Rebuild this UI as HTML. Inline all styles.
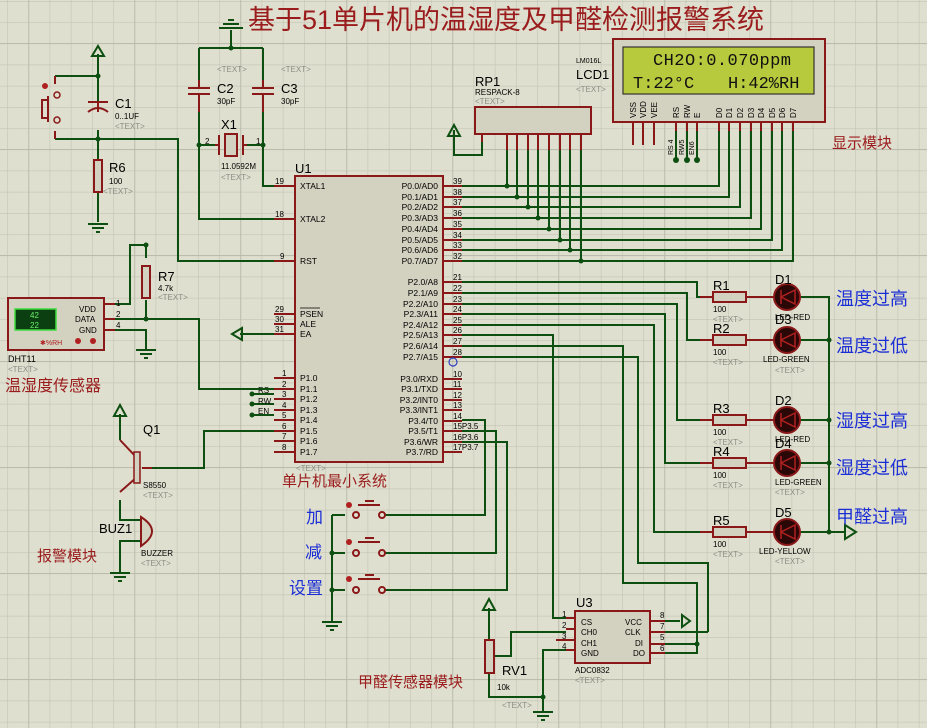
<!DOCTYPE html>
<html><head><meta charset="utf-8"><style>
html,body{margin:0;padding:0;background:#dfdfcf;}
svg{display:block;font-family:"Liberation Sans","Noto Sans CJK SC",sans-serif;}
.w{stroke:#0d4f10;stroke-width:2;fill:none}
.r{stroke:#8a1818;stroke-width:2;fill:none}
.b{fill:#d3d1c0;stroke:#8a1818;stroke-width:2}
.t{font-size:11px;fill:#000}
.s{font-size:8px;fill:#000}
.g{font-size:8px;fill:#8c8c84}
.n{font-size:13px;fill:#000}
.red{fill:#9a1c1c}
.blue{fill:#1c2fd6}
</style></head><body>
<svg width="927" height="728" viewBox="0 0 927 728" xmlns="http://www.w3.org/2000/svg">
<defs>
<pattern id="mn" x="7.2" y="1" width="21.2" height="21.2" patternUnits="userSpaceOnUse"><path d="M0 0H21.2M0 0V21.2" stroke="#c4c4b4" stroke-width="1.2" fill="none"/></pattern>
<pattern id="mj" x="28.3" y="43" width="106" height="106" patternUnits="userSpaceOnUse"><path d="M0 0H106M0 0V106" stroke="#b8b8a8" stroke-width="1.6" fill="none"/></pattern>
</defs>
<rect width="927" height="728" fill="#dfdfcf"/>
<rect width="927" height="728" fill="url(#mn)"/>
<rect width="927" height="728" fill="url(#mj)"/>

<text x="248" y="29" font-size="27" class="red">基于51单片机的温湿度及甲醛检测报警系统</text>

<path class="w" d="M98 54V110M98 130V160M98 192V222M55 76H98M55 139H178V261H274"/>
<path class="w" d="M92 56L98 46L104 56Z"/>
<circle cx="98" cy="76" r="2.5" fill="#0d4f10"/><circle cx="98" cy="139" r="2.5" fill="#0d4f10"/>
<path class="r" d="M88 102H108M88 112Q98 104 108 112M98 102V112"/>
<rect x="94" y="160" width="8" height="32" fill="#d3d1c0" stroke="#8a1818" stroke-width="2"/>
<path class="w" d="M88 224H108M92 228H104M96 232H100"/>
<path class="r" d="M55 76V84M55 131V139M48 96V122M42 100H48V118H42Z"/>
<circle cx="57" cy="95" r="3" fill="none" stroke="#8a1818" stroke-width="1.5"/><circle cx="57" cy="120" r="3" fill="none" stroke="#8a1818" stroke-width="1.5"/>
<circle cx="45" cy="86" r="3" fill="#b02020"/>
<text x="115" y="108" class="n">C1</text><text x="115" y="119" class="s">0..1UF</text><text x="115" y="129" class="g">&lt;TEXT&gt;</text>
<text x="109" y="172" class="n">R6</text><text x="109" y="184" class="s">100</text><text x="103" y="194" class="g">&lt;TEXT&gt;</text>

<path class="w" d="M231 30V48M219 28H243M223 24H239M228 20H234M199 48H263M199 48V80M263 48V80M199 112V219H274M263 112V186H274M199 145H215M247 145H263"/>
<circle cx="231" cy="48" r="2.5" fill="#0d4f10"/><circle cx="199" cy="145" r="2.5" fill="#0d4f10"/><circle cx="263" cy="145" r="2.5" fill="#0d4f10"/>
<path class="r" d="M199 80V88M188 88H210M188 94H210M199 94V112M263 80V88M252 88H274M252 94H274M263 94V112M219 135V155M243 135V155M215 145H219M243 145H247"/>
<rect x="225" y="134" width="12" height="22" fill="#d3d1c0" stroke="#8a1818" stroke-width="2"/>
<text x="217" y="93" class="n">C2</text><text x="217" y="104" class="s">30pF</text>
<text x="281" y="93" class="n">C3</text><text x="281" y="104" class="s">30pF</text>
<text x="217" y="72" class="g">&lt;TEXT&gt;</text><text x="281" y="72" class="g">&lt;TEXT&gt;</text>
<text x="221" y="129" class="n">X1</text><text x="221" y="169" class="s">11.0592M</text><text x="221" y="180" class="g">&lt;TEXT&gt;</text>
<text x="205" y="144" class="s">2</text><text x="256" y="144" class="s">1</text>

<rect x="295" y="176" width="148" height="286" class="b"/>
<text x="295" y="173" font-size="13">U1</text>
<g class="r">
<path d="M274 186H295M274 219H295M274 261H295M274 314H295M274 324H295M274 334H295M274 378H295M274 389H295M274 399H295M274 410H295M274 420H295M274 431H295M274 441H295M274 452H295"/>
<path d="M443 186H462M443 197H462M443 207H462M443 218H462M443 229H462M443 240H462M443 250H462M443 261H462M443 282H462M443 293H462M443 304H462M443 314H462M443 325H462M443 335H462M443 346H462M443 357H462M443 379H462M443 389H462M443 400H462M443 410H462M443 421H462M443 431H462M443 442H462M443 452H462"/>
</g>
<g class="s" font-size="8">
<text x="275" y="184">19</text><text x="275" y="217">18</text><text x="280" y="259">9</text><text x="275" y="312">29</text><text x="275" y="322">30</text><text x="275" y="332">31</text>
<text x="282" y="376">1</text><text x="282" y="387">2</text><text x="282" y="397">3</text><text x="282" y="408">4</text><text x="282" y="418">5</text><text x="282" y="429">6</text><text x="282" y="439">7</text><text x="282" y="450">8</text>
<text x="453" y="184">39</text><text x="453" y="195">38</text><text x="453" y="205">37</text><text x="453" y="216">36</text><text x="453" y="227">35</text><text x="453" y="238">34</text><text x="453" y="248">33</text><text x="453" y="259">32</text>
<text x="453" y="280">21</text><text x="453" y="291">22</text><text x="453" y="302">23</text><text x="453" y="312">24</text><text x="453" y="323">25</text><text x="453" y="333">26</text><text x="453" y="344">27</text><text x="453" y="355">28</text>
<text x="453" y="377">10</text><text x="453" y="387">11</text><text x="453" y="398">12</text><text x="453" y="408">13</text><text x="453" y="419">14</text><text x="453" y="429">15P3.5</text><text x="453" y="440">16P3.6</text><text x="453" y="450">17P3.7</text>
</g>
<g font-size="8.5" fill="#000">
<text x="300" y="189">XTAL1</text><text x="300" y="222">XTAL2</text><text x="300" y="264">RST</text>
<text x="300" y="317">PSEN</text><text x="300" y="327">ALE</text><text x="300" y="337">EA</text>
<text x="300" y="381">P1.0</text><text x="300" y="392">P1.1</text><text x="300" y="402">P1.2</text><text x="300" y="413">P1.3</text><text x="300" y="423">P1.4</text><text x="300" y="434">P1.5</text><text x="300" y="444">P1.6</text><text x="300" y="455">P1.7</text>
<g text-anchor="end">
<text x="438" y="189">P0.0/AD0</text><text x="438" y="200">P0.1/AD1</text><text x="438" y="210">P0.2/AD2</text><text x="438" y="221">P0.3/AD3</text><text x="438" y="232">P0.4/AD4</text><text x="438" y="243">P0.5/AD5</text><text x="438" y="253">P0.6/AD6</text><text x="438" y="264">P0.7/AD7</text>
<text x="438" y="285">P2.0/A8</text><text x="438" y="296">P2.1/A9</text><text x="438" y="307">P2.2/A10</text><text x="438" y="317">P2.3/A11</text><text x="438" y="328">P2.4/A12</text><text x="438" y="338">P2.5/A13</text><text x="438" y="349">P2.6/A14</text><text x="438" y="360">P2.7/A15</text>
<text x="438" y="382">P3.0/RXD</text><text x="438" y="392">P3.1/TXD</text><text x="438" y="403">P3.2/INT0</text><text x="438" y="413">P3.3/INT1</text><text x="438" y="424">P3.4/T0</text><text x="438" y="434">P3.5/T1</text><text x="438" y="445">P3.6/WR</text><text x="438" y="455">P3.7/RD</text>
</g></g>
<path d="M300 308H320" stroke="#000" stroke-width="0.8"/>
<text x="296" y="471" class="g">&lt;TEXT&gt;</text>
<text x="282" y="486" font-size="15" class="red">单片机最小系统</text>
<circle cx="453" cy="362" r="4" fill="none" stroke="#3040c0" stroke-width="1.2"/>

<g class="w">
<path d="M462 186H719V131M462 197H729V131M462 207H740V131M462 218H751V131M462 229H761V131M462 240H772V131M462 250H782V131M462 261H793V131"/>
<path d="M507 150V186M517 150V197M528 150V207M538 150V218M549 150V229M560 150V240M570 150V250M581 150V261"/>
<path d="M482 134V155H454V130M448 136L454 125L460 136Z"/>
<path d="M676 131V160M687 131V160M697 131V160"/>
</g>
<g fill="#0d4f10">
<circle cx="507" cy="186" r="2.5"/><circle cx="517" cy="197" r="2.5"/><circle cx="528" cy="207" r="2.5"/><circle cx="538" cy="218" r="2.5"/><circle cx="549" cy="229" r="2.5"/><circle cx="560" cy="240" r="2.5"/><circle cx="570" cy="250" r="2.5"/><circle cx="581" cy="261" r="2.5"/>
<circle cx="676" cy="160" r="3"/><circle cx="687" cy="160" r="3"/><circle cx="697" cy="160" r="3"/>
</g>

<rect x="475" y="107" width="116" height="27" class="b"/>
<path class="r" d="M482 134V142M507 134V150M517 134V150M528 134V150M538 134V150M549 134V150M560 134V150M570 134V150M581 134V150"/>
<text x="475" y="86" font-size="13">RP1</text><text x="475" y="95" class="s">RESPACK-8</text><text x="475" y="104" class="g">&lt;TEXT&gt;</text>

<rect x="613" y="39" width="212" height="83" fill="#d3d1c0" stroke="#8a1818" stroke-width="2"/>
<rect x="623" y="47" width="191" height="47" fill="#b7c93c" stroke="#333" stroke-width="1.2"/>
<text x="653" y="65" font-family="Liberation Mono,monospace" font-size="17" fill="#111" textLength="138">CH2O:0.070ppm</text>
<text x="633" y="88" font-family="Liberation Mono,monospace" font-size="17" fill="#111">T:22°C</text>
<text x="728" y="88" font-family="Liberation Mono,monospace" font-size="17" fill="#111">H:42%RH</text>
<path class="r" d="M633 122V145M643 122V145M654 122V145M676 122V131M687 122V131M697 122V131M719 122V131M729 122V131M740 122V131M751 122V131M761 122V131M772 122V131M782 122V131M793 122V131"/>
<g font-size="8" fill="#000">
<text transform="translate(636,118) rotate(-90)">VSS</text><text transform="translate(646,118) rotate(-90)">VDD</text><text transform="translate(657,118) rotate(-90)">VEE</text>
<text transform="translate(679,118) rotate(-90)">RS</text><text transform="translate(690,118) rotate(-90)">RW</text><text transform="translate(700,118) rotate(-90)">E</text>
<text transform="translate(722,118) rotate(-90)">D0</text><text transform="translate(732,118) rotate(-90)">D1</text><text transform="translate(743,118) rotate(-90)">D2</text><text transform="translate(754,118) rotate(-90)">D3</text><text transform="translate(764,118) rotate(-90)">D4</text><text transform="translate(775,118) rotate(-90)">D5</text><text transform="translate(785,118) rotate(-90)">D6</text><text transform="translate(796,118) rotate(-90)">D7</text>
<text transform="translate(673,155) rotate(-90)" font-size="7">RS 4</text><text transform="translate(684,155) rotate(-90)" font-size="7">RW5</text><text transform="translate(694,155) rotate(-90)" font-size="7">EN6</text>
</g>
<text x="576" y="63" font-size="7">LM016L</text>
<text x="576" y="79" font-size="13">LCD1</text><text x="576" y="92" class="g">&lt;TEXT&gt;</text>
<text x="832" y="148" font-size="15" class="red">显示模块</text>

<g class="w">
<path d="M462 282H697V297H714M462 293H687V340H714M462 304H677V420H714M462 314H665V463H714M462 325H654V532H714"/>
<path d="M462 335H553V618H566M462 346H623V583H697V644M462 357H638V563H708V632"/>
<path d="M801 297H829V532M801 340H829M801 420H829M801 463H829M801 532H845"/>
<path d="M845 525L856 532L845 539Z"/>
</g>
<g fill="#0d4f10"><circle cx="829" cy="340" r="2.5"/><circle cx="829" cy="420" r="2.5"/><circle cx="829" cy="463" r="2.5"/><circle cx="829" cy="532" r="2.5"/></g>
<g>
<path class="r" d="M700 297H714M746 297H775M700 340H714M746 340H775M700 420H714M746 420H775M700 463H714M746 463H775M700 532H714M746 532H775"/>
<rect x="713" y="292" width="33" height="10" class="b"/><rect x="713" y="335" width="33" height="10" class="b"/><rect x="713" y="415" width="33" height="10" class="b"/><rect x="713" y="458" width="33" height="10" class="b"/><rect x="713" y="527" width="33" height="10" class="b"/>
<g fill="#2a0808" stroke="#8a1818" stroke-width="2">
<circle cx="787" cy="297" r="13"/><circle cx="787" cy="340" r="13"/><circle cx="787" cy="420" r="13"/><circle cx="787" cy="463" r="13"/><circle cx="787" cy="532" r="13"/>
</g>
<g stroke="#b02020" stroke-width="1.5" fill="none">
<path d="M795 290L781 297L795 304ZM781 290V304"/><path d="M795 333L781 340L795 347ZM781 333V347"/><path d="M795 413L781 420L795 427ZM781 413V427"/><path d="M795 456L781 463L795 470ZM781 456V470"/><path d="M795 525L781 532L795 539ZM781 525V539"/>
</g>
</g>
<g font-size="13"><text x="713" y="290">R1</text><text x="713" y="333">R2</text><text x="713" y="413">R3</text><text x="713" y="456">R4</text><text x="713" y="525">R5</text>
<text x="775" y="284">D1</text><text x="775" y="324">D3</text><text x="775" y="405">D2</text><text x="775" y="448">D4</text><text x="775" y="517">D5</text></g>
<g class="s"><text x="713" y="312">100</text><text x="713" y="355">100</text><text x="713" y="435">100</text><text x="713" y="478">100</text><text x="713" y="547">100</text>
<text x="775" y="320">LED-RED</text><text x="763" y="362">LED-GREEN</text><text x="775" y="442">LED-RED</text><text x="775" y="485">LED-GREEN</text><text x="759" y="554">LED-YELLOW</text></g>
<g class="g"><text x="713" y="322">&lt;TEXT&gt;</text><text x="713" y="365">&lt;TEXT&gt;</text><text x="713" y="445">&lt;TEXT&gt;</text><text x="713" y="488">&lt;TEXT&gt;</text><text x="713" y="557">&lt;TEXT&gt;</text>
<text x="775" y="373">&lt;TEXT&gt;</text><text x="775" y="495">&lt;TEXT&gt;</text><text x="775" y="564">&lt;TEXT&gt;</text></g>
<g font-size="18" class="blue">
<text x="836" y="305">温度过高</text><text x="836" y="352">温度过低</text><text x="836" y="427">湿度过高</text><text x="836" y="474">湿度过低</text><text x="836" y="523">甲醛过高</text>
</g>

<path class="w" d="M274 334H240M242 328L232 334L242 340Z"/>
<path class="w" d="M252 394H274M252 404H274M252 415H274"/>
<g fill="#0d4f10"><circle cx="252" cy="394" r="2.5"/><circle cx="252" cy="404" r="2.5"/><circle cx="252" cy="415" r="2.5"/></g>
<g font-size="8"><text x="258" y="393">RS</text><text x="258" y="404">RW</text><text x="258" y="414">EN</text></g>

<path class="w" d="M115 304H130V245H146M146 243V258M146 300V319M104 319H199V389H274M104 330H146V350M136 350H156M140 354H152M144 358H148"/>
<circle cx="146" cy="245" r="2.5" fill="#0d4f10"/><circle cx="146" cy="319" r="2.5" fill="#0d4f10"/>
<rect x="142" y="266" width="8" height="32" class="b"/>
<text x="158" y="281" font-size="13">R7</text><text x="158" y="291" class="s">4.7k</text><text x="158" y="300" class="g">&lt;TEXT&gt;</text>
<rect x="8" y="298" width="96" height="52" class="b"/>
<rect x="15" y="309" width="41" height="21" fill="#0b3e10" stroke="#3cdc3c" stroke-width="1.5"/>
<text x="30" y="318" font-size="8" fill="#6ef06e">42</text><text x="30" y="328" font-size="8" fill="#6ef06e">22</text>
<g font-size="8"><text x="79" y="312">VDD</text><text x="75" y="322">DATA</text><text x="79" y="333">GND</text></g>
<text x="40" y="345" font-size="7" fill="#b02020">✱%RH</text><circle cx="78" cy="341" r="3" fill="#b02020"/><circle cx="93" cy="341" r="3" fill="#b02020"/>
<path class="r" d="M104 304H115M104 319H115M104 330H115"/>
<g font-size="8"><text x="116" y="306">1</text><text x="116" y="317">2</text><text x="116" y="328">4</text></g>
<text x="8" y="362" font-size="9">DHT11</text><text x="8" y="372" class="g">&lt;TEXT&gt;</text>
<text x="5" y="391" font-size="16" class="red">温湿度传感器</text>

<path class="w" d="M120 414V440M114 416L120 405L126 416ZM152 468H204V431H274M120 500V520H140M140 541H120V573M110 573H130M114 577H126M118 581H122"/>
<path class="r" d="M120 440L137 458M120 492L137 477M137 452V483M142 468H152"/>
<rect x="134" y="452" width="6" height="31" fill="#d3d1c0" stroke="#8a1818" stroke-width="1.5"/>
<path d="M141 517Q163 531 141 546Z" fill="#d3d1c0" stroke="#8a1818" stroke-width="2"/>
<text x="143" y="434" font-size="13">Q1</text><text x="143" y="488" class="s">S8550</text><text x="143" y="498" class="g">&lt;TEXT&gt;</text>
<text x="99" y="533" font-size="13">BUZ1</text><text x="141" y="556" class="s">BUZZER</text><text x="141" y="566" class="g">&lt;TEXT&gt;</text>
<text x="37" y="561" font-size="15" class="red">报警模块</text>

<path class="w" d="M332 515H345M332 515V622M322 622H342M326 626H338M330 630H334M332 553H345M332 590H345M385 515H485V420H462M385 553H496V431H462M385 590H507V442H462"/>
<g fill="#0d4f10"><circle cx="332" cy="553" r="2.5"/><circle cx="332" cy="590" r="2.5"/></g>
<g stroke="#8a1818" stroke-width="2" fill="none">
<path d="M358 505H380M365 501H374"/><path d="M358 542H380M365 538H374"/><path d="M358 579H380M365 575H374"/>
<circle cx="356" cy="515" r="3"/><circle cx="382" cy="515" r="3"/><circle cx="356" cy="553" r="3"/><circle cx="382" cy="553" r="3"/><circle cx="356" cy="590" r="3"/><circle cx="382" cy="590" r="3"/>
</g>
<g fill="#b02020"><circle cx="349" cy="505" r="3"/><circle cx="349" cy="542" r="3"/><circle cx="349" cy="579" r="3"/></g>
<g font-size="17" class="blue"><text x="306" y="523">加</text><text x="305" y="558">减</text><text x="289" y="594">设置</text></g>

<path class="w" d="M489 608V640M483 610L489 599L495 610ZM489 673V697H543V650H566M543 697V712M533 712H553M537 716H549M541 720H545M495 656H511V632H566"/>
<circle cx="543" cy="697" r="2.5" fill="#0d4f10"/>
<rect x="485" y="640" width="9" height="33" class="b"/>
<text x="502" y="675" font-size="13">RV1</text><text x="497" y="690" class="s">10k</text><text x="502" y="708" class="g">&lt;TEXT&gt;</text>
<text x="358" y="687" font-size="15" class="red">甲醛传感器模块</text>
<rect x="575" y="611" width="75" height="52" class="b"/>
<path class="r" d="M566 618H575M566 629H575M556 640H575M566 650H575M650 621H665M650 632H665M650 644H665M650 653H665"/>
<path class="w" d="M665 621H680M682 615L690 621L682 627ZM665 632H708M665 644H697M665 653H697V644"/>
<circle cx="697" cy="644" r="2.5" fill="#0d4f10"/>
<g font-size="8"><text x="581" y="625">CS</text><text x="581" y="635">CH0</text><text x="581" y="646">CH1</text><text x="581" y="656">GND</text>
<text x="625" y="625">VCC</text><text x="625" y="635">CLK</text><text x="635" y="646">DI</text><text x="633" y="656">DO</text>
<text x="562" y="617">1</text><text x="562" y="628">2</text><text x="562" y="639">3</text><text x="562" y="649">4</text>
<text x="660" y="618">8</text><text x="660" y="629">7</text><text x="660" y="640">5</text><text x="660" y="651">6</text></g>
<text x="576" y="607" font-size="13">U3</text><text x="575" y="673" class="s">ADC0832</text><text x="575" y="683" class="g">&lt;TEXT&gt;</text>
</svg>
</body></html>
